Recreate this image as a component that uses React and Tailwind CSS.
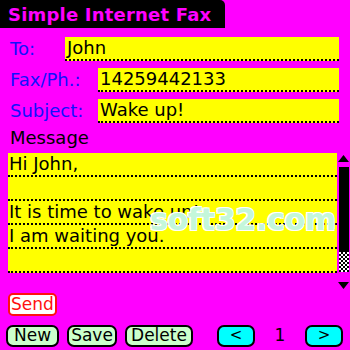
const messageLines = ["Hi John,", "", "It is time to wake up!", "I am waiting you.", ""];

function Field({ label, labelWidth, value, className = "" }) {
  return (
    <div className={`flex items-end h-[24px] ${className}`}>
      <div className="text-[#1010ff] leading-[24px] pl-[2px]" style={{ width: labelWidth }}>
        {label}
      </div>
      <div className="flex-1 h-[24px] bg-[#ffff00] border-b-2 border-dotted border-black leading-[22px] pl-[2px] text-black">
        {value}
      </div>
    </div>
  );
}

function PalmButton({ children, className = "" }) {
  return (
    <div
      className={`h-[22px] border-2 border-black rounded-[7px] flex items-center justify-center leading-none text-black ${className}`}
    >
      {children}
    </div>
  );
}

export default function App() {
  return (
    <div className="w-[350px] h-[350px] bg-[#ff00ff] overflow-hidden relative font-['DejaVu_Sans',sans-serif] text-[18px]">
      {/* title bar */}
      <div className="flex h-[28px]">
        <div className="w-[225px] h-full bg-black rounded-tr-[5px] pl-[8px] text-[#ff00ff] font-bold text-[18px] leading-[30px] tracking-[0.2px]">
          Simple Internet Fax
        </div>
      </div>

      <div className="pl-[8px] pr-[11px] pt-[9px]">
        <Field label="To:" labelWidth={57} value="John" />
        <Field label="Fax/Ph.:" labelWidth={90} value="14259442133" className="mt-[7px]" />
        <Field label="Subject:" labelWidth={90} value="Wake up!" className="mt-[7px]" />
      </div>

      <div className="pl-[10px] mt-[4px] h-[22px] leading-[22px] text-black">Message</div>

      <div className="flex items-start gap-[1px] ml-[8px] mt-[4px] h-[120px]">
        <div className="w-[329px] h-[120px] bg-[#ffff00] flex flex-col">
          {messageLines.map((line, i) => (
            <div
              key={i}
              className="h-[24px] border-b-2 border-dotted border-black leading-[22px] pl-[1px] text-black whitespace-nowrap"
            >
              {line}
            </div>
          ))}
        </div>
        {/* scroll bar */}
        <div className="w-[11px] flex flex-col items-center pt-[2px]">
          <svg width="11" height="7" viewBox="0 0 11 7">
            <polygon points="5.5,0 11,7 0,7" fill="#000" />
          </svg>
          <div className="w-[10px] h-[85px] bg-black mt-[5px]" />
          <div className="w-[10px] h-[20px] bg-[repeating-conic-gradient(#000_0_25%,#fff_0_50%)] bg-[length:4px_4px]" />
          <svg width="11" height="7" viewBox="0 0 11 7" className="mt-[10px]">
            <polygon points="0,0 11,0 5.5,7" fill="#000" />
          </svg>
        </div>
      </div>

      <div className="ml-[8px] mt-[20px] w-[49px] h-[23px] bg-white border-2 border-[#ff1010] rounded-[5px] text-[#ff1010] text-[17px] leading-[19px] text-center">
        Send
      </div>

      <div className="flex items-center mt-[7px] pl-[6px] text-[17px]">
        <PalmButton className="w-[53px] bg-[#ccffcc]">New</PalmButton>
        <PalmButton className="w-[50px] ml-[8px] bg-[#ccffcc]">Save</PalmButton>
        <PalmButton className="w-[68px] ml-[8px] bg-[#ccffcc]">Delete</PalmButton>
        <PalmButton className="w-[38px] ml-[24px] bg-[#00ffff] text-[15px]">&lt;</PalmButton>
        <div className="w-[50px] text-center text-black">1</div>
        <PalmButton className="w-[38px] bg-[#00ffff] text-[15px]">&gt;</PalmButton>
      </div>

      {/* watermark */}
      <div className="absolute left-[150px] top-[197px] text-[30px] font-bold text-[#c4f7da] font-['DejaVu_Sans',sans-serif] [text-shadow:1px_1px_0_#fff,-1px_-1px_0_#fff,1px_-1px_0_#fff,-1px_1px_0_#fff] tracking-[-0.3px]">
        soft32.com
      </div>
    </div>
  );
}
